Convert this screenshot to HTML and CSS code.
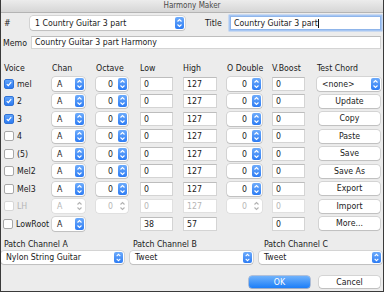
FILE: index.html
```html
<!DOCTYPE html>
<html>
<head>
<meta charset="utf-8">
<link rel="stylesheet" href="styles.css">
</head>
<body>
<div class="win">
  <div class="titlebar">Harmony Maker</div>
  <div class="toprow">
    <span class="hash">#</span>
    <div class="popup pop-name"><span class="val">1 Country Guitar 3 part</span><i class="step"><svg viewBox="0 0 9 12"><path d="M2.5 4.5L4.5 2.5L6.5 4.5M2.5 7.5L4.5 9.5L6.5 7.5"/></svg></i></div>
    <span class="title-lbl">Title</span>
    <div class="field title-field">Country Guitar 3 part<span class="caret"></span></div>
  </div>
  <div class="memorow">
    <span class="memo-lbl">Memo</span>
    <div class="field memo-field">Country Guitar 3 part Harmony</div>
  </div>

  <div class="grid">
    <span class="hd">Voice</span><span class="hd">Chan</span><span class="hd">Octave</span><span class="hd">Low</span><span class="hd">High</span><span class="hd">O Double</span><span class="hd">V.Boost</span><span class="hd">Test Chord</span>

    <div class="voice"><i class="cb on"><svg viewBox="0 0 9 9"><path d="M2 4.6L3.7 6.3L7 2.4"/></svg></i><span>mel</span></div>
    <div class="popup chan"><span class="val">A</span><i class="step"><svg viewBox="0 0 9 12"><path d="M2.5 4.5L4.5 2.5L6.5 4.5M2.5 7.5L4.5 9.5L6.5 7.5"/></svg></i></div>
    <div class="popup num oct"><span class="val">0</span><i class="step"><svg viewBox="0 0 9 12"><path d="M2.5 4.5L4.5 2.5L6.5 4.5M2.5 7.5L4.5 9.5L6.5 7.5"/></svg></i></div>
    <div class="field low">0</div>
    <div class="field high">127</div>
    <div class="popup num od"><span class="val">0</span><i class="step"><svg viewBox="0 0 9 12"><path d="M2.5 4.5L4.5 2.5L6.5 4.5M2.5 7.5L4.5 9.5L6.5 7.5"/></svg></i></div>
    <div class="field vb">0</div>
    <div class="popup tc"><span class="val">&lt;none&gt;</span><i class="step"><svg viewBox="0 0 9 12"><path d="M2.5 4.5L4.5 2.5L6.5 4.5M2.5 7.5L4.5 9.5L6.5 7.5"/></svg></i></div>

    <div class="voice"><i class="cb on"><svg viewBox="0 0 9 9"><path d="M2 4.6L3.7 6.3L7 2.4"/></svg></i><span>2</span></div>
    <div class="popup chan"><span class="val">A</span><i class="step"><svg viewBox="0 0 9 12"><path d="M2.5 4.5L4.5 2.5L6.5 4.5M2.5 7.5L4.5 9.5L6.5 7.5"/></svg></i></div>
    <div class="popup num oct"><span class="val">0</span><i class="step"><svg viewBox="0 0 9 12"><path d="M2.5 4.5L4.5 2.5L6.5 4.5M2.5 7.5L4.5 9.5L6.5 7.5"/></svg></i></div>
    <div class="field low">0</div>
    <div class="field high">127</div>
    <div class="popup num od"><span class="val">0</span><i class="step"><svg viewBox="0 0 9 12"><path d="M2.5 4.5L4.5 2.5L6.5 4.5M2.5 7.5L4.5 9.5L6.5 7.5"/></svg></i></div>
    <div class="field vb">0</div>
    <div class="btn">Update</div>

    <div class="voice"><i class="cb on"><svg viewBox="0 0 9 9"><path d="M2 4.6L3.7 6.3L7 2.4"/></svg></i><span>3</span></div>
    <div class="popup chan"><span class="val">A</span><i class="step"><svg viewBox="0 0 9 12"><path d="M2.5 4.5L4.5 2.5L6.5 4.5M2.5 7.5L4.5 9.5L6.5 7.5"/></svg></i></div>
    <div class="popup num oct"><span class="val">0</span><i class="step"><svg viewBox="0 0 9 12"><path d="M2.5 4.5L4.5 2.5L6.5 4.5M2.5 7.5L4.5 9.5L6.5 7.5"/></svg></i></div>
    <div class="field low">0</div>
    <div class="field high">127</div>
    <div class="popup num od"><span class="val">0</span><i class="step"><svg viewBox="0 0 9 12"><path d="M2.5 4.5L4.5 2.5L6.5 4.5M2.5 7.5L4.5 9.5L6.5 7.5"/></svg></i></div>
    <div class="field vb">0</div>
    <div class="btn">Copy</div>

    <div class="voice"><i class="cb"></i><span>4</span></div>
    <div class="popup chan"><span class="val">A</span><i class="step"><svg viewBox="0 0 9 12"><path d="M2.5 4.5L4.5 2.5L6.5 4.5M2.5 7.5L4.5 9.5L6.5 7.5"/></svg></i></div>
    <div class="popup num oct"><span class="val">0</span><i class="step"><svg viewBox="0 0 9 12"><path d="M2.5 4.5L4.5 2.5L6.5 4.5M2.5 7.5L4.5 9.5L6.5 7.5"/></svg></i></div>
    <div class="field low">0</div>
    <div class="field high">127</div>
    <div class="popup num od"><span class="val">0</span><i class="step"><svg viewBox="0 0 9 12"><path d="M2.5 4.5L4.5 2.5L6.5 4.5M2.5 7.5L4.5 9.5L6.5 7.5"/></svg></i></div>
    <div class="field vb">0</div>
    <div class="btn">Paste</div>

    <div class="voice"><i class="cb"></i><span>(5)</span></div>
    <div class="popup chan"><span class="val">A</span><i class="step"><svg viewBox="0 0 9 12"><path d="M2.5 4.5L4.5 2.5L6.5 4.5M2.5 7.5L4.5 9.5L6.5 7.5"/></svg></i></div>
    <div class="popup num oct"><span class="val">0</span><i class="step"><svg viewBox="0 0 9 12"><path d="M2.5 4.5L4.5 2.5L6.5 4.5M2.5 7.5L4.5 9.5L6.5 7.5"/></svg></i></div>
    <div class="field low">0</div>
    <div class="field high">127</div>
    <div class="popup num od"><span class="val">0</span><i class="step"><svg viewBox="0 0 9 12"><path d="M2.5 4.5L4.5 2.5L6.5 4.5M2.5 7.5L4.5 9.5L6.5 7.5"/></svg></i></div>
    <div class="field vb">0</div>
    <div class="btn">Save</div>

    <div class="voice"><i class="cb"></i><span>Mel2</span></div>
    <div class="popup chan"><span class="val">A</span><i class="step"><svg viewBox="0 0 9 12"><path d="M2.5 4.5L4.5 2.5L6.5 4.5M2.5 7.5L4.5 9.5L6.5 7.5"/></svg></i></div>
    <div class="popup num oct"><span class="val">0</span><i class="step"><svg viewBox="0 0 9 12"><path d="M2.5 4.5L4.5 2.5L6.5 4.5M2.5 7.5L4.5 9.5L6.5 7.5"/></svg></i></div>
    <div class="field low">0</div>
    <div class="field high">127</div>
    <div class="popup num od"><span class="val">0</span><i class="step"><svg viewBox="0 0 9 12"><path d="M2.5 4.5L4.5 2.5L6.5 4.5M2.5 7.5L4.5 9.5L6.5 7.5"/></svg></i></div>
    <div class="field vb">0</div>
    <div class="btn">Save As</div>

    <div class="voice"><i class="cb"></i><span>Mel3</span></div>
    <div class="popup chan"><span class="val">A</span><i class="step"><svg viewBox="0 0 9 12"><path d="M2.5 4.5L4.5 2.5L6.5 4.5M2.5 7.5L4.5 9.5L6.5 7.5"/></svg></i></div>
    <div class="popup num oct"><span class="val">0</span><i class="step"><svg viewBox="0 0 9 12"><path d="M2.5 4.5L4.5 2.5L6.5 4.5M2.5 7.5L4.5 9.5L6.5 7.5"/></svg></i></div>
    <div class="field low">0</div>
    <div class="field high">127</div>
    <div class="popup num od"><span class="val">0</span><i class="step"><svg viewBox="0 0 9 12"><path d="M2.5 4.5L4.5 2.5L6.5 4.5M2.5 7.5L4.5 9.5L6.5 7.5"/></svg></i></div>
    <div class="field vb">0</div>
    <div class="btn">Export</div>

    <div class="voice dis"><i class="cb"></i><span>LH</span></div>
    <div class="popup chan dis"><span class="val">A</span><i class="step"><svg viewBox="0 0 9 12"><path d="M2.5 4.5L4.5 2.5L6.5 4.5M2.5 7.5L4.5 9.5L6.5 7.5"/></svg></i></div>
    <div class="popup num oct dis"><span class="val">0</span><i class="step"><svg viewBox="0 0 9 12"><path d="M2.5 4.5L4.5 2.5L6.5 4.5M2.5 7.5L4.5 9.5L6.5 7.5"/></svg></i></div>
    <div class="field low dis">0</div>
    <div class="field high dis">127</div>
    <div class="popup num od dis"><span class="val">0</span><i class="step"><svg viewBox="0 0 9 12"><path d="M2.5 4.5L4.5 2.5L6.5 4.5M2.5 7.5L4.5 9.5L6.5 7.5"/></svg></i></div>
    <div class="field vb dis">0</div>
    <div class="btn">Import</div>

    <div class="voice lowroot"><i class="cb"></i><span>LowRoot</span></div>
    <div class="popup chan"><span class="val">A</span><i class="step"><svg viewBox="0 0 9 12"><path d="M2.5 4.5L4.5 2.5L6.5 4.5M2.5 7.5L4.5 9.5L6.5 7.5"/></svg></i></div>
    <span></span>
    <div class="field low">38</div>
    <div class="field high">57</div>
    <span></span>
    <div class="field vb">0</div>
    <div class="btn">More...</div>
  </div>

  <div class="patch">
    <span class="plbl">Patch Channel A</span>
    <span class="plbl">Patch Channel B</span>
    <span class="plbl plbl-c">Patch Channel C</span>
    <div class="popup ppop"><span class="val">Nylon String Guitar</span><i class="step"><svg viewBox="0 0 9 12"><path d="M2.5 4.5L4.5 2.5L6.5 4.5M2.5 7.5L4.5 9.5L6.5 7.5"/></svg></i></div>
    <div class="popup ppop"><span class="val">Tweet</span><i class="step"><svg viewBox="0 0 9 12"><path d="M2.5 4.5L4.5 2.5L6.5 4.5M2.5 7.5L4.5 9.5L6.5 7.5"/></svg></i></div>
    <div class="popup ppop"><span class="val">Tweet</span><i class="step"><svg viewBox="0 0 9 12"><path d="M2.5 4.5L4.5 2.5L6.5 4.5M2.5 7.5L4.5 9.5L6.5 7.5"/></svg></i></div>
  </div>

  <div class="actions">
    <div class="btn ok">OK</div>
    <div class="btn cancel">Cancel</div>
  </div>
</div>
</body>
</html>
```

FILE: styles.css
```css
* { box-sizing: border-box; margin: 0; padding: 0; }
html, body { width: 384px; height: 292px; overflow: hidden; }
body {
  font-family: "DejaVu Sans Condensed", "Liberation Sans", sans-serif;
  font-size: 8.7px;
  color: #1a1a1a;
  background: #ececec;
}
.win {
  width: 384px;
  height: 292px;
  border: 1px solid #3a3a3a;
  border-top: 0;
  background: #ececec;
  display: flex;
  flex-direction: column;
}
.titlebar {
  height: 13px;
  line-height: 12px;
  text-align: center;
  color: #4a4a4a;
  font-size: 8px;
  background: linear-gradient(#ececec, #d6d6d6);
  border-bottom: 1px solid #b4b4b4;
}

/* generic controls */
.field {
  height: 14px;
  line-height: 12px;
  background: #fff;
  border: 1px solid #d4d4d4;
  border-top-color: #bdbdbd;
  padding-left: 3px;
  white-space: nowrap;
  overflow: hidden;
}
.popup {
  height: 14px;
  background: #fff;
  border-radius: 3px;
  box-shadow: 0 0 0 0.5px rgba(0,0,0,0.2), 0 1px 1px rgba(0,0,0,0.1);
  display: flex;
  align-items: center;
  padding-left: 5px;
  white-space: nowrap;
}
.popup .val { flex: 1; }
.popup.num .val { text-align: right; padding-right: 5px; }
.step {
  display: block;
  width: 9px;
  height: 12px;
  margin-right: 1px;
  border-radius: 2px;
  background: linear-gradient(#6dabfb, #2d7cf4);
  flex: none;
}
.step svg { display: block; width: 9px; height: 12px; fill: none; stroke: #fff; stroke-width: 1.1; }
.btn {
  height: 13px;
  line-height: 13px;
  text-align: center;
  background: #fff;
  border-radius: 3px;
  box-shadow: 0 0 0 0.5px rgba(0,0,0,0.2), 0 1px 1px rgba(0,0,0,0.1);
}
.cb {
  display: block;
  width: 10px;
  height: 10px;
  border-radius: 2px;
  background: #fff;
  border: 1px solid #a8a8a8;
  flex: none;
}
.cb.on { background: linear-gradient(#62a4fa, #2c7af2); border-color: #3073d6; }
.cb svg { display: block; width: 8px; height: 8px; fill: none; stroke: #fff; stroke-width: 1.4; }

/* top rows */
.toprow {
  display: flex;
  align-items: center;
  height: 16px;
  margin-top: 2px;
  padding-left: 3px;
}
.hash { width: 26px; }
.pop-name { width: 155px; }
.title-lbl { margin-left: 20px; width: 25px; }
.title-field {
  width: 151px;
  border-color: #8fb5ea;
  box-shadow: 0 0 0 1.5px #a6c6f3;
  display: flex;
  align-items: center;
}
.caret { display: inline-block; width: 1px; height: 9px; background: #111; margin-left: 0.5px; }
.memorow {
  display: flex;
  align-items: center;
  height: 13px;
  margin-top: 5px;
  padding-left: 2px;
}
.memo-lbl { width: 28px; }
.memo-field { width: 350px; height: 13px; line-height: 11px; }

/* grid */
.grid {
  display: grid;
  grid-template-columns: 48px 44px 44px 43px 44px 45px 45px 64px;
  grid-template-rows: 10px repeat(9, 14px);
  row-gap: 3.5px;
  align-items: center;
  margin: 14px 0 0 3px;
}
.hd { line-height: 10px; }
.voice { display: flex; align-items: center; }
.voice span { margin-left: 3px; }
.voice.lowroot { margin-left: -1px; }
.chan { width: 33px; }
.oct { width: 32px; }
.low { width: 33px; }
.high { width: 34px; }
.od { width: 35px; }
.vb { width: 33px; }
.tc { width: 64px; }
.grid .btn { width: 61px; margin-left: 2px; }

.dis { color: #b6b6b6; }
.dis .cb { border-color: #d6d6d6; }
.popup.dis .step { background: none; }
.popup.dis .step svg { stroke: #b2b2b2; }
.popup.dis { box-shadow: 0 0 0 0.5px rgba(0,0,0,0.1); }
.field.dis { border-color: #e0e0e0; }

/* patch */
.patch {
  display: grid;
  grid-template-columns: repeat(3, 123px);
  grid-template-rows: 10px 13px;
  column-gap: 6px;
  row-gap: 2px;
  margin-top: 8px;
}
.plbl { padding-left: 3px; line-height: 10px; }
.plbl-c { padding-left: 5px; }
.ppop { height: 13px; }
.ppop .step { height: 11px; }
.ppop .step svg { height: 11px; }

/* actions */
.actions {
  display: flex;
  justify-content: flex-end;
  gap: 9px;
  margin-top: 12px;
  padding-right: 3px;
}
.actions .btn { width: 61px; height: 12px; line-height: 12px; }
.btn.ok {
  color: #fff;
  background: linear-gradient(#70b2fb, #1c7ef8);
  box-shadow: 0 0 0 0.5px rgba(0,60,160,0.5), 0 1px 1px rgba(0,0,0,0.12);
}
```
